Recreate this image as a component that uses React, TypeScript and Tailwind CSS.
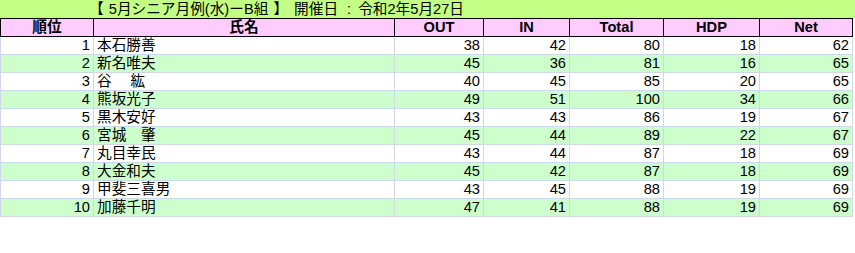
import React from "react";

type Row = {
  rank: number;
  name: string;
  out: number;
  inn: number;
  total: number;
  hdp: number;
  net: number;
};

const rows: Row[] = [
  { rank: 1, name: "本石勝善", out: 38, inn: 42, total: 80, hdp: 18, net: 62 },
  { rank: 2, name: "新名唯夫", out: 45, inn: 36, total: 81, hdp: 16, net: 65 },
  { rank: 3, name: "谷　 紘", out: 40, inn: 45, total: 85, hdp: 20, net: 65 },
  { rank: 4, name: "熊坂光子", out: 49, inn: 51, total: 100, hdp: 34, net: 66 },
  { rank: 5, name: "黒木安好", out: 43, inn: 43, total: 86, hdp: 19, net: 67 },
  { rank: 6, name: "宮城　肇", out: 45, inn: 44, total: 89, hdp: 22, net: 67 },
  { rank: 7, name: "丸目幸民", out: 43, inn: 44, total: 87, hdp: 18, net: 69 },
  { rank: 8, name: "大金和夫", out: 45, inn: 42, total: 87, hdp: 18, net: 69 },
  { rank: 9, name: "甲斐三喜男", out: 43, inn: 45, total: 88, hdp: 19, net: 69 },
  { rank: 10, name: "加藤千明", out: 47, inn: 41, total: 88, hdp: 19, net: 69 },
];

const cols = "grid grid-cols-[93px_301px_89px_86px_94px_96px_93px]";
const font = "font-['Liberation_Sans','Noto_Sans_CJK_JP',sans-serif]";

function HeadCell({ children }: { children: React.ReactNode }) {
  return (
    <div className="h-[17px] border-r border-black text-center text-[14.67px] font-bold leading-[17px]">
      {children}
    </div>
  );
}

function NumCell({ value }: { value: number }) {
  return (
    <div className="h-[17px] border-r border-[#d0d7e5] pr-[3px] text-right text-[14.67px] leading-[17px]">
      {value}
    </div>
  );
}

export default function App() {
  return (
    <div className={`h-[253px] w-[855px] bg-white text-black ${font}`}>
      {/* title line sits in column B like the sheet's merged cell */}
      <div className="flex h-[18px] bg-[#c2ff84] pl-[89px] text-[14.67px] leading-[18px] whitespace-pre [text-spacing-trim:space-all]">
        <span className="[word-spacing:1px]">【 5月シニア月例(水)ーB組 】</span>
        <span className="ml-[6px]">開催日</span>
        <span className="ml-[9px]">:</span>
        <span className="ml-[7px]">令和2年5月27日</span>
      </div>

      <div className={`${cols} w-[853px] border-y border-l border-black bg-[#ffccff]`}>
        <HeadCell>順位</HeadCell>
        <HeadCell>氏名</HeadCell>
        <HeadCell>OUT</HeadCell>
        <HeadCell>IN</HeadCell>
        <HeadCell>Total</HeadCell>
        <HeadCell>HDP</HeadCell>
        <HeadCell>Net</HeadCell>
      </div>

      {rows.map((r) => (
        <div
          key={r.rank}
          className={`${cols} w-[853px] border-b border-l border-[#d0d7e5] ${
            r.rank % 2 === 0 ? "bg-[#ccffcc]" : "bg-white"
          }`}
        >
          <NumCell value={r.rank} />
          <div className="h-[17px] border-r border-[#d0d7e5] pl-[3px] text-[14.67px] leading-[17px] whitespace-pre">
            {r.name}
          </div>
          <NumCell value={r.out} />
          <NumCell value={r.inn} />
          <NumCell value={r.total} />
          <NumCell value={r.hdp} />
          <NumCell value={r.net} />
        </div>
      ))}
    </div>
  );
}
